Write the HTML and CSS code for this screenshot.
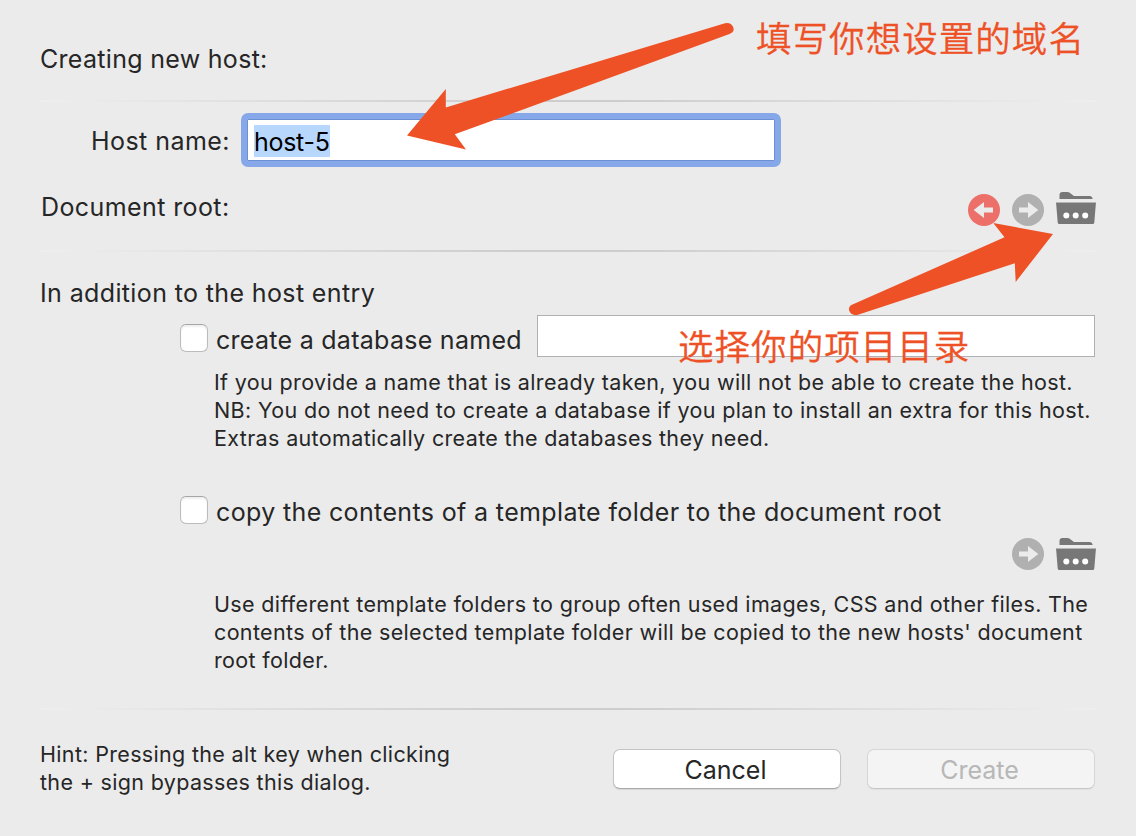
FILE: index.html
```html
<!DOCTYPE html>
<html lang="en">
<head>
<meta charset="utf-8">
<title>Creating new host</title>
<link rel="stylesheet" href="styles.css">
</head>
<body>
<svg class="defs" width="0" height="0" aria-hidden="true">
  <symbol id="arrow-right" viewBox="0 0 32 32">
    <circle cx="16" cy="16" r="16"/>
    <path fill="#ebebeb" d="M7 13.5h9V8l10.3 8L16 24v-5.5H7z"/>
  </symbol>
  <symbol id="folder" viewBox="0 0 40 32">
    <path d="M3.500 7V3q0-3 3-3H11.500q2 0 3.500 1.700L18 4h15.500q2.700 0 3.200 3z"/>
    <path fill="#b5b5b5" d="M0 10h40v1.200H0z"/>
    <path d="M.1 11h39.800l-1.600 19.500q-.1 1.500-1.600 1.500H3.300q-1.500 0-1.600-1.500z"/>
    <g fill="#fff"><circle cx="10.300" cy="23.500" r="3"/><circle cx="19.700" cy="23.500" r="3"/><circle cx="29.200" cy="23.500" r="3"/></g>
  </symbol>
</svg>
<main class="dialog">
  <h1 class="title">Creating new host:</h1>
  <div class="rule"></div>
  <div class="host-row">
    <label class="host-label">Host name:</label>
    <div class="host-field"><span class="selection">host-5</span></div>
  </div>
  <div class="root-row">
    <span class="root-label">Document root:</span>
    <div class="tools">
      <svg class="round back"><use href="#arrow-right"/></svg>
      <svg class="round"><use href="#arrow-right"/></svg>
      <svg class="folder"><use href="#folder"/></svg>
    </div>
  </div>
  <div class="rule"></div>
  <h2 class="subtitle">In addition to the host entry</h2>
  <div class="option option-db">
    <span class="checkbox"></span>
    <label class="option-label">create a database named</label>
    <div class="db-field"></div>
  </div>
  <p class="note">If you provide a name that is already taken, you will not be able to create the host.<br>NB: You do not need to create a database if you plan to install an extra for this host.<br>Extras automatically create the databases they need.</p>
  <div class="option option-copy">
    <span class="checkbox"></span>
    <label class="option-label">copy the contents of a template folder to the document root</label>
  </div>
  <div class="tools tools-template">
    <svg class="round"><use href="#arrow-right"/></svg>
    <svg class="folder"><use href="#folder"/></svg>
  </div>
  <p class="note note-template">Use different template folders to group often used images, CSS and other files. The<br>contents of the selected template folder will be copied to the new hosts' document<br>root folder.</p>
  <div class="rule"></div>
  <footer class="footer">
    <p class="hint">Hint: Pressing the alt key when clicking<br>the + sign bypasses this dialog.</p>
    <div class="buttons">
      <button class="btn">Cancel</button>
      <button class="btn btn-off" disabled>Create</button>
    </div>
  </footer>
  <svg class="arrows" viewBox="0 0 1136 836" aria-hidden="true">
    <path d="M407 135.500 445.800 89V107.500L725 23.200Q731.500 22 733.500 28Q734.500 32 729.500 34L454.800 134.300 466 149.500Z"/>
    <path d="M1053 234 1015.700 282 1014.800 263.300 858 314.700Q851.500 316 849.300 311Q848 306 852.500 304.500L1004.500 237.300 993.300 223Z"/>
  </svg>
  <div class="callout callout-host" lang="zh">填写你想设置的域名</div>
  <div class="callout callout-root" lang="zh">选择你的项目目录</div>
</main>
</body>
</html>
```
FILE: styles.css
```css
* { box-sizing: border-box; }

body {
  margin: 0;
  background: #ebebeb;
  color: #262626;
  font: 25px/28px Inter, "Liberation Sans", sans-serif;
  white-space: nowrap;
}

h1, h2, p { margin: 0; font-size: inherit; font-weight: 400; }

svg { display: block; }

.defs { position: absolute; }

.dialog {
  position: relative;
  width: 1136px;
  height: 836px;
  padding: 0 40px;
  overflow: hidden;
}

.title { height: 100px; padding-top: 45px; letter-spacing: .3px; }

.rule {
  height: 2px;
  background: linear-gradient(90deg, #eee 0, #ebebeb 4%, #cdcdcd 45%, #cdcdcd 55%, #ebebeb 96%, #eee 100%);
}

.host-row { display: flex; align-items: center; height: 76px; padding-left: 51px; }

.host-label { width: 150px; margin-top: 2px; letter-spacing: .45px; }

.host-field {
  display: flex;
  align-items: center;
  width: 540px;
  height: 54px;
  padding: 1px 0 0 6px;
  border: 6px solid #87a8e8;
  border-radius: 7px;
  background: #fff;
  box-shadow: inset 0 0 0 1px #6c90d5;
  color: #000;
}

.selection {
  width: 76px;
  height: 32px;
  margin-left: 1px;
  background: #b8d7fd;
  line-height: 34px;
  letter-spacing: -.3px;
}

.root-row { display: flex; justify-content: space-between; height: 72px; padding-top: 14px; }

.root-label { margin: 1px 0 0 1px; letter-spacing: .4px; }

.tools { display: flex; gap: 12px; }

.round { width: 32px; height: 32px; margin-top: 2px; fill: #b0b0b0; }

.back { transform: scaleX(-1); fill: #ec7069; }

.folder { width: 40px; height: 32px; fill: #777; }

.subtitle { padding-top: 27px; letter-spacing: .37px; }

.option { display: flex; padding-left: 140px; }

.option-db { height: 42px; margin: 8px 1px 11px 0; }

.checkbox {
  width: 28px;
  height: 28px;
  border: 1px solid #bcbcbc;
  border-top-color: #a6a6a6;
  border-radius: 6px;
  background: #fff;
  box-shadow: inset 0 2px 2px #efefef;
}

.option-db .checkbox { margin-top: 9px; }

.option-label { margin: 2px 0 0 8px; letter-spacing: .36px; }

.option-db .option-label { width: 321px; margin-top: 11px; letter-spacing: .28px; }

.db-field { flex: 1; border: 1px solid #b0b0b0; background: #fff; }

.note, .hint { font-size: 21.5px; letter-spacing: .35px; }

.note { padding-left: 174px; }

.option-copy { height: 28px; margin: 44px 0 14px; }

.tools-template { justify-content: flex-end; }

.tools-template .round { margin-top: 0; }

.note-template { margin: 20px 0 34px; }

.footer { display: flex; justify-content: space-between; padding: 30px 1px 0 0; }

.hint { letter-spacing: .33px; }

.buttons { display: flex; gap: 26px; padding-top: 9px; }

.btn {
  width: 228px;
  height: 40px;
  padding: 1px 3px 0 0;
  border: 1px solid #c4c4c4;
  border-bottom-color: #a9a9a9;
  border-radius: 7px;
  background: #fff;
  box-shadow: 0 1px 1px #d6d6d6;
  color: #262626;
  font: inherit;
}

.btn-off { border-color: #d6d6d6; border-bottom-color: #c8c8c8; background: #f4f4f4; box-shadow: 0 1px 1px #e0e0e0; color: #b7b7b7; }

/* Annotations drawn over the dialog */
.arrows { position: absolute; inset: 0; width: 1136px; height: 836px; fill: #ee5126; pointer-events: none; }

.callout {
  position: absolute;
  color: #ee5126;
  font: 350 35.5px/40px "Noto Sans CJK SC", sans-serif;
  letter-spacing: 1.05px;
  -webkit-text-stroke: .3px #ee5126;
}

.callout-host { left: 756px; top: 17px; }

.callout-root { left: 678px; top: 325px; }
```
